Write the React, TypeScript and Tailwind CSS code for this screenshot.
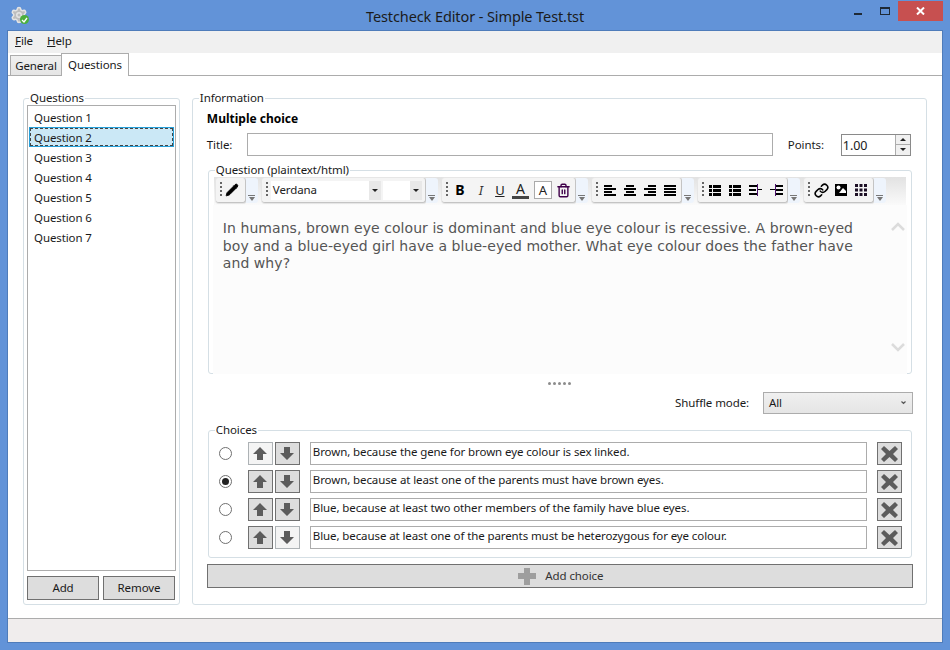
import { Settings, Pencil, Trash2, Link } from "lucide-react"
import type { ReactNode } from "react"

const QUESTIONS = ["Question 1", "Question 2", "Question 3", "Question 4", "Question 5", "Question 6", "Question 7"]

const CHOICES = [
  { text: "Brown, because the gene for brown eye colour is sex linked.", checked: false, upOff: true, downOff: false },
  { text: "Brown, because at least one of the parents must have brown eyes.", checked: true, upOff: false, downOff: false },
  { text: "Blue, because at least two other members of the family have blue eyes.", checked: false, upOff: false, downOff: false },
  { text: "Blue, because at least one of the parents must be heterozygous for eye colour.", checked: false, upOff: false, downOff: true },
]

function Group({ label, className, legendClass, children }: { label: string; className: string; legendClass: string; children: ReactNode }) {
  return (
    <fieldset className={`border border-[#d5dfe5] rounded-[3px] min-w-0 ${className}`}>
      <legend className={`px-[1px] leading-[14px] text-[#1a1a1a] ${legendClass}`}>{label}</legend>
      {children}
    </fieldset>
  )
}

function Arrow({ down }: { down?: boolean }) {
  return (
    <svg width="14" height="15" viewBox="0 0 14 15" className={down ? "rotate-180" : ""}>
      <path d="M7 1 L14 8 H10 V14 H4 V8 H0 Z" fill="#5c5c5c" />
    </svg>
  )
}

function MoveButton({ down, off }: { down?: boolean; off?: boolean }) {
  return (
    <button className={`w-[25px] h-[23px] border flex items-center justify-center ${off ? "bg-[#f4f4f4] border-[#adb2b5]" : "bg-[#dddddd] border-[#707070]"}`}>
      <Arrow down={down} />
    </button>
  )
}

function Overflow() {
  return (
    <div className="w-[12px] h-[25px] bg-[#eef4fc] rounded-r-[3px] flex flex-col items-center justify-end pb-[2px] gap-[1px]">
      <div className="w-[7px] h-px bg-[#777]" />
      <div className="w-0 h-0 border-x-[3.5px] border-x-transparent border-t-[4px] border-t-[#777]" />
    </div>
  )
}

function Grip() {
  return (
    <div className="flex flex-col gap-[2px] ml-[4px] mr-[3px] self-start mt-[4px]">
      <div className="w-[2px] h-[2px] bg-[#666]" />
      <div className="w-[2px] h-[2px] bg-[#666]" />
      <div className="w-[2px] h-[2px] bg-[#666]" />
      <div className="w-[2px] h-[2px] bg-[#666]" />
    </div>
  )
}

function ToolGroup({ width, children }: { width: string; children: ReactNode }) {
  return (
    <div className="flex items-start">
      <div className={`h-[25px] ${width} flex items-center rounded-[3px] bg-[#f4f4f4] border-b border-r border-[#c4c4c4] shadow-[0_0_0_1px_#e6e6e6]`}>
        <Grip />
        {children}
      </div>
      <Overflow />
    </div>
  )
}

function Lines({ rows }: { rows: [number, number][] }) {
  return (
    <svg width="12" height="11" viewBox="0 0 12 11">
      {rows.map(([x, w], i) => (
        <rect key={i} x={x} y={i * 3} width={w} height="2" fill="#000" />
      ))}
    </svg>
  )
}

function ListIcon() {
  return (
    <svg width="12" height="11" viewBox="0 0 12 11">
      {[0, 4, 8].map((y) => (
        <g key={y}>
          <rect x="0" y={y} width="3" height="3" fill="#000" />
          <rect x="4" y={y} width="8" height="3" fill="#000" />
        </g>
      ))}
    </svg>
  )
}

function IndentIcon({ out }: { out?: boolean }) {
  return (
    <svg width="13" height="12" viewBox="0 0 13 12">
      {out ? (
        <>
          <rect x="5" y="1" width="8" height="2" fill="#000" />
          <rect x="6" y="5" width="7" height="2" fill="#000" />
          <rect x="5" y="9" width="8" height="2" fill="#000" />
          <rect x="5" y="0" width="1" height="12" fill="#4b0f6b" />
          <rect x="0" y="5" width="5" height="1" fill="#000" />
        </>
      ) : (
        <>
          <rect x="0" y="1" width="8" height="2" fill="#000" />
          <rect x="0" y="5" width="7" height="2" fill="#000" />
          <rect x="0" y="9" width="8" height="2" fill="#000" />
          <rect x="8" y="0" width="1" height="12" fill="#4b0f6b" />
          <rect x="9" y="5" width="4" height="1" fill="#000" />
        </>
      )}
    </svg>
  )
}

function DropArrow() {
  return (
    <div className="w-[12px] h-[19px] bg-[#e8e8e8] flex items-center justify-center">
      <div className="w-0 h-0 border-x-[3px] border-x-transparent border-t-[3px] border-t-[#222]" />
    </div>
  )
}

function Toolbar() {
  return (
    <div className="h-[28px] mx-[5px] pl-[2px] pt-[1px] flex gap-[4px] bg-gradient-to-b from-[#e2e2e2] to-[#fafafa]">
      <ToolGroup width="w-[30px]">
        <Pencil size={14} fill="#000" color="#000" strokeWidth={1.5} />
      </ToolGroup>
      <ToolGroup width="w-[164px]">
        <div className="w-[110px] h-[19px] bg-white flex items-center justify-between">
          <span className="pl-[2px] text-[#222]">Verdana</span>
          <DropArrow />
        </div>
        <div className="ml-[2px] w-[39px] h-[19px] bg-white flex justify-end">
          <DropArrow />
        </div>
      </ToolGroup>
      <ToolGroup width="w-[134px]">
        <div className="w-[18px] text-center font-bold text-[14px] leading-[16px] text-black">B</div>
        <div className="ml-[2px] w-[20px] text-center italic text-[13px] leading-[16px] text-[#333]">I</div>
        <div className="w-[18px] text-center text-[13px] leading-[16px] underline text-[#222]">U</div>
        <div className="ml-[3px] w-[17px] text-center text-[14px] leading-[15px] border-b-[3px] border-[#444] text-[#222]">A</div>
        <div className="ml-[5px] w-[18px] h-[18px] bg-white border border-[#aaa] text-center text-[13px] leading-[16px] text-[#222]">A</div>
        <div className="ml-[2px] w-[20px] flex justify-center"><Trash2 size={15} color="#40004a" strokeWidth={2.25} /></div>
      </ToolGroup>
      <ToolGroup width="w-[90px]">
        <div className="flex gap-[8px] ml-[3px]">
          <Lines rows={[[0, 8], [0, 12], [0, 8], [0, 12]]} />
          <Lines rows={[[2, 8], [0, 12], [2, 8], [0, 12]]} />
          <Lines rows={[[4, 8], [0, 12], [4, 8], [0, 12]]} />
          <Lines rows={[[0, 12], [0, 12], [0, 12], [0, 12]]} />
        </div>
      </ToolGroup>
      <ToolGroup width="w-[90px]">
        <div className="flex gap-[8px] ml-[2px] items-center">
          <ListIcon />
          <ListIcon />
          <IndentIcon />
          <IndentIcon out />
        </div>
      </ToolGroup>
      <ToolGroup width="w-[70px]">
        <div className="flex gap-[6px] ml-[1px] items-center">
          <Link size={15} color="#000" strokeWidth={2.5} />
          <svg width="12" height="12" viewBox="0 0 12 12">
            <rect width="12" height="12" fill="#000" />
            <circle cx="3.5" cy="3.5" r="2" fill="#fff" />
            <path d="M4 9 L8 4 L11 7 V9 Z" fill="#fff" />
          </svg>
          <svg width="12" height="12" viewBox="0 0 12 12" className="ml-[2px]">
            {[0, 4.5, 9].map((y) =>
              [0, 4.5, 9].map((x) => <rect key={`${x}-${y}`} x={x} y={y} width="3" height="3" fill="#1c0f24" />)
            )}
          </svg>
        </div>
      </ToolGroup>
    </div>
  )
}

function Chevron({ up }: { up?: boolean }) {
  return (
    <svg width="14" height="9" viewBox="0 0 14 9">
      <path d={up ? "M1 8 L7 2 L13 8" : "M1 1 L7 7 L13 1"} fill="none" stroke="#dcdcdc" strokeWidth="2.5" />
    </svg>
  )
}

function TitleBar() {
  return (
    <div className="h-[31px] shrink-0 grid grid-cols-[1fr_auto_1fr]">
      <div className="ml-[10px] mt-[6px] w-[18px] h-[18px] relative">
        <Settings size={18} color="#e4e4e4" fill="#bdbdbd" strokeWidth={2} />
        <div className="absolute right-[-1px] bottom-[0px] w-[9px] h-[9px] rounded-full bg-[#4caf3c] flex items-center justify-center">
          <svg width="7" height="6" viewBox="0 0 7 6">
            <path d="M1 3 L3 5 L6 1" fill="none" stroke="#fff" strokeWidth="1.3" />
          </svg>
        </div>
      </div>
      <div className="pt-[7px] text-[14.5px] tracking-[-0.1px] leading-[18px] text-[#1b1b1b]">
        Testcheck Editor - Simple Test.tst
      </div>
      <div className="flex items-start justify-end pr-[7px]">
        <div className="w-[8px] h-[2px] mt-[13px] bg-[#1f2a36]" />
        <div className="ml-[18px] mt-[7px] w-[10px] h-[8px] border border-t-2 border-[#1f2a36]" />
        <div className="ml-[8px] mt-[1px] w-[45px] h-[20px] bg-[#c75050] flex items-center justify-center">
          <svg width="9" height="8" viewBox="0 0 9 8">
            <path d="M1 0.5 L8 7.5 M8 0.5 L1 7.5" stroke="#fff" strokeWidth="2" />
          </svg>
        </div>
      </div>
    </div>
  )
}

export default function App() {
  return (
    <div className="w-[950px] h-[650px] bg-[#6293d8] flex flex-col overflow-hidden font-['Noto_Sans',sans-serif] text-[11.5px] tracking-[-0.1px] text-[#1a1a1a]">
      <TitleBar />
      <div className="mx-[8px] h-[611px] shrink-0 flex flex-col bg-white shadow-[0_0_0_1px_#4f7cba]">
        {/* menu */}
        <div className="h-[22px] bg-[#f0f0f0] flex items-center pl-[7px] pb-[2px] gap-[14px] leading-[20px]">
          <span><span className="underline">F</span>ile</span>
          <span><span className="underline">H</span>elp</span>
        </div>

        {/* tabs */}
        <div className="h-[23px] flex items-end pl-[2px] border-b border-[#acacac]">
          <div className="h-[21px] w-[52px] -mb-px border border-[#acacac] bg-gradient-to-b from-[#f0f0f0] to-[#e5e5e5] text-center leading-[20px]">General</div>
          <div className="h-[23px] w-[68px] -mb-px -ml-px border border-b-0 border-[#acacac] bg-white text-center leading-[21px] relative">Questions</div>
        </div>

        <div className="flex-1 flex pl-[15px] pr-[15px] pt-[15px] gap-[12px]">
          {/* question list */}
          <Group label="Questions" legendClass="ml-[2px]" className="w-[157px] h-[514px] px-[3px] pb-[4px] flex flex-col">
            <div className="flex flex-col h-[495px]">
              <div className="h-[466px] border border-[#acacac] p-px">
                {QUESTIONS.map((q, i) => (
                  <div key={q} className={i === 1 ? "h-[20px] pl-[4px] leading-[19px] bg-[#cbe8f6] border border-[#26a0da] outline-1 outline-dashed outline-[#444] -outline-offset-2" : "h-[20px] pl-[5px] leading-[21px]"}>
                    {q}
                  </div>
                ))}
              </div>
              <div className="mt-[5px] flex gap-[4px]">
                <button className="w-[72px] h-[24px] bg-[#dddddd] border border-[#707070]">Add</button>
                <button className="w-[72px] h-[24px] bg-[#dddddd] border border-[#707070]">Remove</button>
              </div>
            </div>
          </Group>

          {/* information */}
          <Group label="Information" legendClass="-ml-[8px]" className="w-[736px] h-[514px] pl-[14px] pr-[13px]">
            <div className="font-bold text-[12px] tracking-normal leading-[16px] mt-[6px] text-black">Multiple choice</div>

            <div className="mt-[6px] h-[23px] flex items-center">
              <span className="w-[40px]">Title:</span>
              <div className="w-[526px] h-[23px] border border-[#acacac] bg-white" />
              <span className="ml-[15px] w-[53px]">Points:</span>
              <div className="w-[70px] h-[22px] border border-[#8a8a8a] flex">
                <span className="flex-1 pl-[1px] leading-[22px] text-[12.5px]">1.00</span>
                <div className="w-[15px] flex flex-col border-l border-[#acacac]">
                  <div className="flex-1 bg-[#f0f0f0] flex items-center justify-center border-b border-[#acacac]">
                    <div className="w-0 h-0 border-x-[3px] border-x-transparent border-b-[3px] border-b-[#222]" />
                  </div>
                  <div className="flex-1 bg-[#f0f0f0] flex items-center justify-center">
                    <div className="w-0 h-0 border-x-[3px] border-x-transparent border-t-[3px] border-t-[#222]" />
                  </div>
                </div>
              </div>
            </div>

            <Group label="Question (plaintext/html)" legendClass="ml-[6px]" className="mt-[7px] ml-px w-[704px] h-[211px]">
              <Toolbar />
              <div className="h-[169px] mx-[4px] bg-[#fcfcfc] flex pl-[10px] pt-[15px] text-[#555] font-['DejaVu_Sans',sans-serif] text-[14px] tracking-[0.06px] leading-[17.5px]">
                <div className="w-[668px]">
                  <div className="whitespace-nowrap">In humans, brown eye colour is dominant and blue eye colour is recessive. A brown-eyed</div>
                  <div className="whitespace-nowrap">boy and a blue-eyed girl have a blue-eyed mother. What eye colour does the father have</div>
                  <div className="whitespace-nowrap">and why?</div>
                </div>
                <div className="w-[14px] flex flex-col justify-between pt-[2px] pb-[22px]">
                  <Chevron up />
                  <Chevron />
                </div>
              </div>
            </Group>

            {/* splitter */}
            <div className="h-[18px] flex items-center justify-center gap-[2px]">
              {[0, 1, 2, 3, 4].map((i) => (
                <div key={i} className="w-[3px] h-[3px] rounded-full bg-[#8c8c8c]" />
              ))}
            </div>

            <div className="h-[22px] flex items-center justify-end">
              <span className="mr-[14px]">Shuffle mode:</span>
              <div className="w-[150px] h-[22px] -mt-[1px] border border-[#acacac] bg-gradient-to-b from-[#f0f0f0] to-[#e5e5e5] flex items-center justify-between pl-[5px] pr-[6px]">
                <span>All</span>
                <svg width="5" height="4" viewBox="0 0 5 4">
                  <path d="M0.5 0.5 L2.5 2.5 L4.5 0.5" fill="none" stroke="#555" strokeWidth="1.2" />
                </svg>
              </div>
            </div>

            <Group label="Choices" legendClass="-ml-[4px]" className="mt-[9px] ml-px w-[704px] h-[135px] pl-[10px]">
              <div className="flex flex-col gap-[5px] mt-[5px]">
                {CHOICES.map((c) => (
                  <div key={c.text} className="h-[23px] flex items-center">
                    <div className="w-[13px] h-[13px] rounded-full border border-[#707070] bg-white flex items-center justify-center">
                      {c.checked && <div className="w-[7px] h-[7px] rounded-full bg-[#222]" />}
                    </div>
                    <div className="ml-[16px] flex gap-[2px]">
                      <MoveButton off={c.upOff} />
                      <MoveButton down off={c.downOff} />
                    </div>
                    <div className="ml-[10px] w-[557px] h-[23px] border border-[#acacac] bg-white pl-[2px] leading-[18px] overflow-hidden whitespace-nowrap">
                      {c.text}
                    </div>
                    <button className="ml-[10px] w-[25px] h-[23px] bg-[#dddddd] border border-[#707070] flex items-center justify-center">
                      <svg width="19" height="18" viewBox="0 0 19 18">
                        <path d="M4 1 L9.5 6 L15 1 L18 4 L13 9 L18 14 L15 17 L9.5 12 L4 17 L1 14 L6 9 L1 4 Z" fill="#5c5c5c" />
                      </svg>
                    </button>
                  </div>
                ))}
              </div>
            </Group>

            <button className="mt-[6px] w-[706px] h-[24px] bg-[#dddddd] border border-[#707070] flex items-center justify-center gap-[9px] pl-[2px]">
              <svg width="18" height="17" viewBox="0 0 18 17">
                <path d="M6 0 H12 V5 H18 V11 H12 V17 H6 V11 H0 V5 H6 Z" fill="#9e9e9e" />
              </svg>
              <span className="text-[#333]">Add choice</span>
            </button>
          </Group>
        </div>

        {/* status bar */}
        <div className="h-[24px] mt-auto bg-[#f0eded] border-t border-[#acacac]" />
      </div>
    </div>
  )
}
